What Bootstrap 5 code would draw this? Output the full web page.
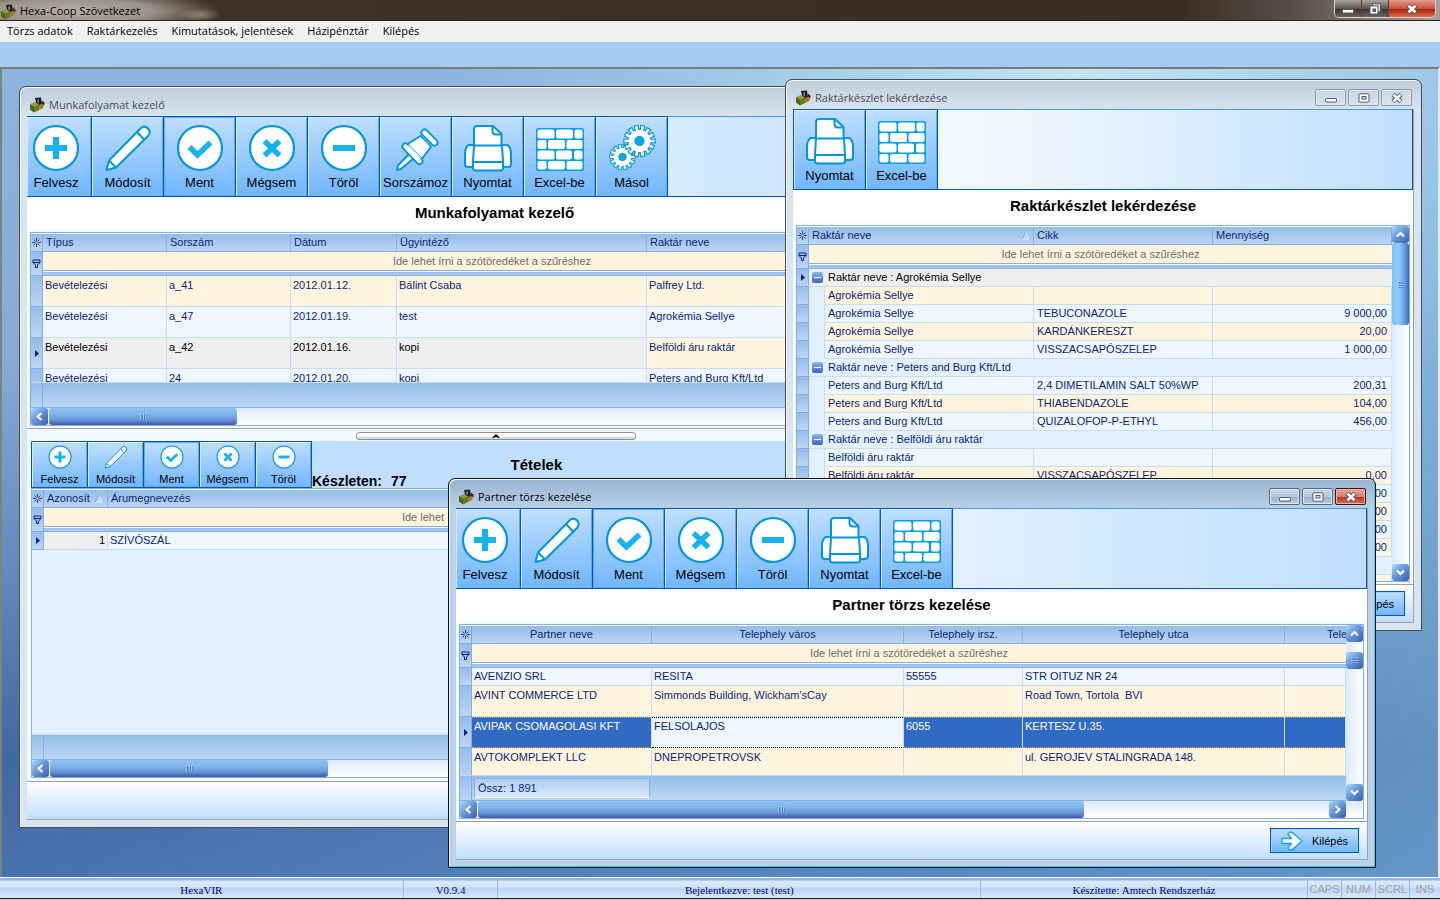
<!DOCTYPE html>
<html lang="hu">
<head>
<meta charset="utf-8">
<meta name="viewport" content="width=device-width, initial-scale=1">
<title>Hexa-Coop Szövetkezet</title>
<link rel="stylesheet" href="https://cdn.jsdelivr.net/npm/bootstrap@5.3.0/dist/css/bootstrap.min.css">
<style>
:root{--navy:#0a1f7d;--line:#86ade6;--cell:#c8dcf5;--btnline:#0058b4;--cream:#fff5de;--pale:#eef6ff;--ui:"Open Sans","Noto Sans",sans-serif;--sans:"Liberation Sans",Arial,sans-serif}
body{font-family:var(--sans);font-size:11px;line-height:18px;color:#000;background:#a6caf0}
button,input{font:inherit;color:inherit}
.minh-0{min-height:0}.minw-0{min-width:0}

/* main window */
.app-title{height:21px;font-family:var(--ui);line-height:22px;background:radial-gradient(ellipse 150px 22px at 70px 11px,#b5aea7 0,#9b9289 55%,transparent 100%),radial-gradient(ellipse 22px 7px at 200px 15px,#8a7b6c,transparent),linear-gradient(90deg,#3f3227 0,#3b2d22 82%,#59504a 90%,#a59d97 100%);border-bottom:1px solid #222}
.app-ctl{height:18px;border:1px solid #d8d3cf;border-top:0;border-radius:0 0 5px 5px;overflow:hidden}
.app-ctl button{border:0;border-right:1px solid #4a443f;padding:0;height:17px;width:27px;background:linear-gradient(#a9a39d,#5d554f 50%,#37302b 51%,#6d665f);display:flex;align-items:center;justify-content:center}
.app-ctl .x{width:46px;border-right:0;background:linear-gradient(#e29a88,#c9523a 50%,#a62108 51%,#e06a48)}
.app-menu{height:21px;background:#f0f0f0;font-family:var(--ui);padding-bottom:2px}
.app-menu a{color:#000;text-decoration:none;padding:0 7px}
.app-band{height:25px;background:#a6caf0}
.mdi{border:2px solid #696969;border-top-color:#7b7b7b;border-left-color:#808080;border-right-color:#e3e8ee;border-bottom:0;
background:radial-gradient(ellipse 45% 45% at 75% 0,#c4e5f2 0,#b4dcefaa 40%,transparent 100%),linear-gradient(90deg,#3f669c00 0,#7fb6dc88 100%),linear-gradient(180deg,#8cb4de 0,#86acd6 35%,#6389bd 62%,#41689f 85%,#4872b0 100%);position:relative;overflow:auto}

/* child windows */
.win{position:absolute;border:1px solid #4b4b4b;border-radius:7px 7px 0 0;padding:0 7px 7px;background:linear-gradient(#bfcddb 0,#d7e4f2 30px);box-shadow:inset 1px 1px 0 #f4f8fc}
.win.act{border-color:#111;background:linear-gradient(#99b4d1 0,#b9d1ea 30px);box-shadow:inset 1px 1px 0 #eef5fb,inset -1px -1px 0 #2fd0e4}
.w-munka{left:17px;top:17px;width:952px;height:742px}
.w-keszlet{left:783px;top:10px;width:637px;height:552px}
.w-partner{left:446px;top:409px;width:928px;height:390px}
.win-title{height:29px;font-family:var(--ui);color:#4d4d4d;padding:9px 2px 3px 2px}
.act .win-title{color:#000}
.win-ctl{gap:2px}
.win-ctl button{width:31px;height:17px;padding:0;border:1px solid #8a97a8;border-radius:2px;background:linear-gradient(#c9d6e3,#d5e2ef);box-shadow:inset 0 0 0 1px #dfe9f3;display:flex;align-items:center;justify-content:center}
.act .win-ctl button{border-color:#57687e;background:linear-gradient(#c5d7ea,#b3c9e0 50%,#96b0cd 51%,#b4cde6)}
.act .win-ctl .x{border-color:#4d1010;background:linear-gradient(#e6a79a,#d67d6c 50%,#b8321c 51%,#d0705c);box-shadow:inset 0 0 0 1px #e8b5aa}
.win-body{background:#f4fbff;border-right:1px solid #a0a0a0}

/* toolbar */
.tools{height:81px;border:1px solid var(--btnline);border-left:0;border-top-color:#4a98ee;background:linear-gradient(90deg,#f4faff 0,#f0f8ff 35%,#c0dfff 100%)}
.tb{width:72px;padding:2px 0 0;border:0;border-right:1px solid var(--btnline);background:linear-gradient(#c0dfff,#70b6ff);box-shadow:inset 1px 1px 0 #d9ecff,inset -1px 0 0 #5ba8fa;font-size:13px;line-height:18px;text-align:center;white-space:nowrap;margin-top:-1px;border-top:1px solid var(--btnline)}
.tb svg{display:block;margin:0 auto 2px;width:48px;height:48px}
.tb.cut{width:65px;padding-right:6px}
.tb.hot{box-shadow:inset 0 0 0 1px #5ba8fa}
.tb.edge{border-left:1px solid var(--btnline);width:73px}
.tools.mini{height:47px;border-left:1px solid var(--btnline);border-right:0}
.mini .tb{width:56px;font-size:11px;padding-top:3px}
.mini .tb svg{width:24px;height:24px;margin-bottom:1px}
.cap{height:33px;background:#fff;font-size:15px;font-weight:700;line-height:32px;text-align:center}
.cap2{background:#c0dfff}
.cap2 b{font-size:15px}.cap2 .stock{font-size:14px;line-height:14px;gap:9px}
.cap2 .tet{margin-left:104px}

/* data grid */
.gridbox{margin:2px 3px 2px 3px;border:1px solid var(--line);background:#e2f0ff}
.gridbox.items{margin:0 3px 3px 4px}
.view{border-top:1px solid #fff}
.gt{table-layout:fixed;width:100%;border-collapse:separate;border-spacing:0;color:var(--navy)}
.gt th,.gt td{height:18px;line-height:17px;padding:0 3px;font-weight:400;vertical-align:top;white-space:pre;overflow:hidden;border-right:1px solid var(--cell);border-bottom:1px solid var(--cell)}
.tall td,.items td{padding:0 2px}
.gt.tall td{height:31px}
.tall tbody td{line-height:19px}
.gt.tall .low td{height:18px;line-height:17px}
.gt .num{padding-right:4px;text-align:right}
.gt thead th{background:linear-gradient(#94bde9,#bcd6f3);border-color:var(--line)}
.gt .ind{background:linear-gradient(#94bde9,#bcd6f3);border-color:var(--line);padding:0;text-align:center;vertical-align:middle}
.gt .ind svg{display:block;margin:0 auto}
.gt .flt{height:24px;padding:0;border-right:0;background:linear-gradient(var(--cream) 18px,var(--line) 18px,var(--line) 19px,#fff 19px,#fff 20px,#94bde9 20px,#b5d0f0 24px)}
.flt input{display:block;width:100%;height:18px;border:0;background:none;text-align:center;padding:0;outline:0}
.flt input::placeholder{color:#6c6c6c;opacity:1}
.gt .c td{background:var(--cream)}.gt .p td{background:var(--pale)}
.gt .g td{background:#e2f0ff;border-right:0}
.gt .now td,.gt td.now{background:#efefef;color:#000}
.gt .sel td{background:#316ac5;color:#fff;border-bottom:1px dotted #e8a33a;background-image:linear-gradient(90deg,#e8a33a 50%,transparent 50%);background-size:2px 1px;background-repeat:repeat-x}
.gt .sel td.foc{background:var(--pale);color:var(--navy);border-bottom-color:#000;background-image:linear-gradient(90deg,#000 50%,transparent 50%);background-size:2px 1px;background-repeat:repeat-x}
.gt tr .ind.ind{padding:0;background:linear-gradient(#94bde9,#bcd6f3)!important;border-bottom:1px solid var(--line)!important;border-right:1px solid var(--line)}
.gt tr .pad{background:#e2f0ff!important;border-bottom-color:#e2f0ff;padding:0}
.gt .tele{padding-left:42px}
.twisty{width:11px;height:11px;border:0;border-radius:2px;padding:0;background:linear-gradient(#8ab8f0,#3a66b8);margin:3px 5px 0 0;vertical-align:top;display:inline-block}
.twisty::before{content:"";display:block;width:7px;height:1px;background:#fff;margin:0 auto}
.foot{height:26px;border-top:1px solid var(--cell);background:linear-gradient(#94bde9,#bcd6f3);border-bottom:1px solid var(--line);color:var(--navy)}
.foot i{width:12px;border-right:1px solid var(--line)}
.sum{width:176px;height:20px;margin:2px;padding:0 3px;border:1px solid var(--line);border-bottom-color:#fff;background:linear-gradient(#b0cdf0,#d8e8fa)}

/* scroll bars */
.hs{height:17px;background:linear-gradient(#dceafb,#fff)}
.hs-corner{padding-right:17px}
.vs{width:17px;background:linear-gradient(90deg,#dceafb,#fff)}
.sb{width:17px;height:17px;flex:none;padding:0;border:0;border-radius:3px;background:linear-gradient(135deg,#a6dcff 0,#6da0de 40%,#3a5cab 100%);display:flex;align-items:center;justify-content:center}
.th-s{margin-top:10px}
.th-h,.th-v{flex:none;border:0;padding:0;border-radius:3px;display:flex;align-items:center;justify-content:center}
.th-h{height:17px;background:linear-gradient(#8cc4f2,#7eb2ea 40%,#6796d8 70%,#3d57a8)}
.th-v{width:17px;height:82px;background:linear-gradient(90deg,#7cc0f6,#90ccff 40%,#5a94e0 80%,#3d5fb4)}
.hs .th-h{margin-left:1px}
.l187{width:188px}.l278{width:278px}.l607{width:606px}
.leave{height:39px;border-top:1px solid #a0a0a0;border-bottom:1px solid #a0a0a0;background:linear-gradient(#fff,#c0dfff);padding-right:8px}
.leave button{width:89px;height:25px;padding:0 10px;border:1px solid var(--btnline);background:linear-gradient(#c0dfff,#70b6ff);box-shadow:inset 1px 1px 0 #a5d0ff}
.split{height:13px;padding-top:3px;border-top:1px solid #a0a0a0;background:#f0fbff}
.split button{width:280px;height:8px;margin-left:329px;padding:0;border:1px solid #909090;border-radius:3px;background:linear-gradient(#fff 40%,#b8d4e4);display:flex;align-items:center;justify-content:center}
.h194{height:194px}

/* status bar */
.status{height:21px;border-top:1px solid #fff;background:linear-gradient(#8fb4e6 0,#8fb4e6 2px,#dbe9fa 3px,#d3e4f9 9px,#b9d4f5 10px,#d9e8fb 100%);font-family:"Liberation Serif",serif;color:#000080;line-height:24px;font-size:11px}
.status>span{text-align:center;border-right:1px solid #9fb8dc;white-space:nowrap;overflow:hidden}
.s1{flex:404 1 0}.s2{flex:94 1 0}.s3{flex:483 1 0}.s4{flex:327 1 0}
.status .k{font-family:var(--sans);color:#a0a0a0;flex:none;width:34px;line-height:22px}
.status .k:last-child{border:0;width:30px}
.desk-edge{height:2px;background:linear-gradient(#222 1px,#c8bdb2 1px)}
</style>
</head>
<body class="d-flex flex-column vh-100 overflow-hidden">
<svg width="0" height="0" class="position-absolute" aria-hidden="true">
<defs>
<g id="disc"><circle cx="24" cy="24" r="22" fill="#fff" stroke="#0096dc" stroke-width="2.2"/></g>
<symbol id="i-add" viewBox="0 0 48 48"><use href="#disc"/><path d="M24 13v22M13 24h22" stroke="#14b4f0" stroke-width="6"/></symbol>
<symbol id="i-edit" viewBox="0 0 48 48"><path d="M2.500 46 5 36.500 37 4Q40.500 1 44 4.500T44 12L12 43.500ZM5 36.500 12 43.500M33 8 40 15.500" fill="#fff" stroke="#0096dc" stroke-width="2" stroke-linejoin="round"/></symbol>
<symbol id="i-ok" viewBox="0 0 48 48"><use href="#disc"/><path d="M13.500 23 21.500 31 34.500 18.500" fill="none" stroke="#14b4f0" stroke-width="5.500"/></symbol>
<symbol id="i-no" viewBox="0 0 48 48"><use href="#disc"/><path d="M16.500 17 31.500 31.500M31.500 17 16.500 31.500" stroke="#14b4f0" stroke-width="5.500"/></symbol>
<symbol id="i-del" viewBox="0 0 48 48"><use href="#disc"/><path d="M13 24h22" stroke="#14b4f0" stroke-width="6"/></symbol>
<symbol id="i-pin" viewBox="0 0 48 48"><g stroke-linecap="round" stroke-linejoin="round"><path d="M5 46 6 41.500 18 29 22.500 33.500 9 45Z" fill="#fff" stroke="#0096dc" stroke-width="1.900"/><path d="M28.500 12 39 23 29 36 14 21Z" fill="#fff" stroke="#0096dc" stroke-width="1.900"/><path d="M32.500 8.500 42.500 18.500M13.500 22.500 27.500 37" stroke="#0096dc" stroke-width="8"/><path d="M32.500 8.500 42.500 18.500M13.500 22.500 27.500 37" stroke="#fff" stroke-width="4.400"/><path d="M29 13.500 37.500 22 28 34.500 16 22Z" fill="#fff"/><path d="M29 12.500 38.500 22M17 21.500 29 33" stroke="#14b4f0" stroke-width="1"/></g></symbol>
<symbol id="i-print" viewBox="0 0 48 48"><g fill="#fff" stroke="#0096dc" stroke-width="2" stroke-linejoin="round"><path d="M10 23V5Q10 2 13 2H29L37.500 10V23Z"/><path d="M28.500 2.500V7Q28.500 10.500 32 10.500H36.500" fill="none"/><path d="M10 21H4.500Q1 24 1 29V40Q1 43 4 43H10ZM38 21H43.500Q47 24 47 29V40Q47 43 44 43H38Z"/><path d="M10 21.500H38L39 38V44Q39 46.500 36 46.500H12Q9 46.500 9 44V38ZM9 38H39"/></g></symbol>
<symbol id="i-brick" viewBox="0 0 48 48"><rect x="0" y="4" width="48" height="43" rx="2.500" fill="#08a0e4"/><g fill="#fff"><rect x="1.500" y="5.500" width="17" height="9" rx="2"/><rect x="20" y="5.500" width="17" height="9" rx="2"/><rect x="38.500" y="5.500" width="8" height="9" rx="2"/><rect x="1.500" y="16" width="9" height="9" rx="2"/><rect x="12" y="16" width="17" height="9" rx="2"/><rect x="30.500" y="16" width="16" height="9" rx="2"/><rect x="1.500" y="26.500" width="17" height="9" rx="2"/><rect x="20" y="26.500" width="16" height="9" rx="2"/><rect x="38" y="26.500" width="8.500" height="9" rx="2"/><rect x="1.500" y="37" width="9" height="8.500" rx="2"/><rect x="12" y="37" width="17" height="8.500" rx="2"/><rect x="30.500" y="37" width="16" height="8.500" rx="2"/></g></symbol>
<g id="gear" fill="none"><circle r="12.500" stroke="#0096dc" stroke-width="7.500" pathLength="140" stroke-dasharray="8 2" stroke-dashoffset="4"/><circle r="12.500" fill="#0096dc"/><circle r="12" stroke="#fff" stroke-width="6" pathLength="140" stroke-dasharray="4.400 5.600" stroke-dashoffset="2.200"/><circle r="11" fill="#fff"/><circle r="4.600" fill="#08a8ec" stroke="#0096dc"/></g>
<symbol id="i-gear" viewBox="0 0 48 48"><use href="#gear" transform="translate(14.500 33) scale(.82)"/><use href="#gear" transform="translate(31.500 17)"/></symbol>
<symbol id="i-app" viewBox="0 0 16 16"><path d="M6 1 12 .5 13 9 8 10Z" fill="#1c1c1e"/><path d="M8 2.500 10 2.300V6H8.500Z" fill="#77808a"/><path d="M10.500 7 15 8 14 11 10 13Z" fill="#b0761a"/><path d="M13 3.500 15.500 5.500V8L12 7Z" fill="#3a2a10"/><path d="M1 7 6 5 10 7.500 5 9.500Z" fill="#8ea03a"/><path d="M1 7 5 9.500V15.500L1 12.500Z" fill="#4c6418"/><path d="M5 9.500 10 7.500V13L5 15.500Z" fill="#667c22"/></symbol>
<symbol id="i-star" viewBox="0 0 9 9"><path d="M4.500 0v9M0 4.500h9M1.500 1.500l6 6M7.500 1.500l-6 6" stroke="#0a1f7d" stroke-width=".8"/><circle cx="4.500" cy="4.500" r="1.300" fill="#b5d0f0"/></symbol>
<symbol id="i-filter" viewBox="0 0 9 9"><path d="M1 1h7v2.500L5.500 6v2.500h-2V6L1 3.500ZM1 3.500h7" fill="none" stroke="#0a1f7d"/></symbol>
<symbol id="i-cur" viewBox="0 0 4 7"><path d="M0 0 4 3.500 0 7Z" fill="#0a1f7d"/></symbol>
<symbol id="i-sort" viewBox="0 0 9 9"><path d="M4.500 1 8 8H1Z" fill="#b4d0f2" stroke="#e6f2ff"/><path d="M4.500 1 1 8" stroke="#6c9ad8" fill="none"/></symbol>
<symbol id="c-l" viewBox="0 0 9 9"><path d="M6.500 1 2.500 4.500 6.500 8" fill="none" stroke="#fff" stroke-width="2"/></symbol>
<symbol id="c-r" viewBox="0 0 9 9"><path d="M2.500 1 6.500 4.500 2.500 8" fill="none" stroke="#fff" stroke-width="2"/></symbol>
<symbol id="c-u" viewBox="0 0 9 9"><path d="M1 6.500 4.500 3 8 6.500" fill="none" stroke="#fff" stroke-width="2"/></symbol>
<symbol id="c-d" viewBox="0 0 9 9"><path d="M1 2.500 4.500 6 8 2.500" fill="none" stroke="#fff" stroke-width="2"/></symbol>
<symbol id="g-v" viewBox="0 0 7 7"><path d="M1 0v7M3.500 0v7M6 0v7" stroke="#c4dcf8" stroke-width=".8"/><path d="M1.800 1v6M4.300 1v6M6.800 1v6" stroke="#3c64b4" stroke-width=".8"/></symbol>
<symbol id="g-h" viewBox="0 0 7 7"><path d="M0 1h7M0 3.500h7M0 6h7" stroke="#c4dcf8" stroke-width=".8"/><path d="M1 1.800h6M1 4.300h6M1 6.800h6" stroke="#3c64b4" stroke-width=".8"/></symbol>
<symbol id="w-min" viewBox="0 0 12 10"><rect x=".5" y="5.500" width="11" height="3.500" rx=".8" fill="#fff" stroke="#555a68"/></symbol>
<symbol id="w-max" viewBox="0 0 12 10"><rect x="1" y=".8" width="10" height="8.400" rx=".8" fill="#fff" stroke="#555a68"/><rect x="4" y="3.500" width="4" height="2.500" fill="#dde" stroke="#555a68"/></symbol>
<symbol id="w-res" viewBox="0 0 12 12"><rect x="3.500" y=".8" width="8" height="8" fill="#ddd" stroke="#555a68"/><rect x="1" y="3" width="8" height="8" fill="#fff" stroke="#555a68"/><rect x="4" y="6" width="2.500" height="2.500" fill="#666" stroke="#555a68"/></symbol>
<symbol id="w-x" viewBox="0 0 12 10"><path d="M2 1.500 10 8.500M10 1.500 2 8.500" stroke="#555a68" stroke-width="4.600"/><path d="M2.500 1.800 9.500 8.200M9.500 1.800 2.500 8.200" stroke="#fff" stroke-width="2.600"/></symbol>
<symbol id="i-out" viewBox="0 0 22 20"><path d="M1 7.500H10.500L7.500 4Q6.500 2.500 8 1.500T11.500 1.500L21 10 11.500 18.500Q9.500 19.500 8 18.500T7.500 16L10.500 12.500H1Z" fill="#fff" stroke="#12a4e6" stroke-width="1.400" stroke-linejoin="round"/></symbol>
</defs>
</svg>

<header class="app-title d-flex align-items-start flex-shrink-0">
  <svg width="16" height="16" class="mt-1"><use href="#i-app"/></svg>
  <span class="ps-1">Hexa-Coop Szövetkezet</span>
  <div class="app-ctl d-flex ms-auto me-1">
    <button aria-label="Kis méret"><svg width="12" height="10"><use href="#w-min"/></svg></button>
    <button aria-label="Előző méret"><svg width="12" height="12"><use href="#w-res"/></svg></button>
    <button class="x" aria-label="Bezárás"><svg width="12" height="10"><use href="#w-x"/></svg></button>
  </div>
</header>
<nav class="app-menu d-flex align-items-center flex-shrink-0">
  <a href="#">Törzs adatok</a><a href="#">Raktárkezelés</a><a href="#">Kimutatások, jelentések</a><a href="#">Házipénztár</a><a href="#">Kilépés</a>
</nav>
<div class="app-band flex-shrink-0"></div>

<main class="mdi flex-grow-1 minh-0">

<section class="win w-munka d-flex flex-column">
  <div class="win-title d-flex align-items-center flex-shrink-0"><svg width="16" height="16"><use href="#i-app"/></svg><span class="ps-1">Munkafolyamat kezelő</span></div>
  <div class="win-body d-flex flex-column flex-grow-1 minh-0">
    <div class="tools d-flex flex-shrink-0">
      <button class="tb cut"><svg><use href="#i-add"/></svg>Felvesz</button>
      <button class="tb"><svg><use href="#i-edit"/></svg>Módosít</button>
      <button class="tb hot"><svg><use href="#i-ok"/></svg>Ment</button>
      <button class="tb"><svg><use href="#i-no"/></svg>Mégsem</button>
      <button class="tb"><svg><use href="#i-del"/></svg>Töröl</button>
      <button class="tb"><svg><use href="#i-pin"/></svg>Sorszámoz</button>
      <button class="tb"><svg><use href="#i-print"/></svg>Nyomtat</button>
      <button class="tb"><svg><use href="#i-brick"/></svg>Excel-be</button>
      <button class="tb"><svg><use href="#i-gear"/></svg>Másol</button>
    </div>
    <h1 class="cap m-0 flex-shrink-0">Munkafolyamat kezelő</h1>
    <div class="gridbox h194 d-flex flex-column flex-shrink-0">
      <div class="d-flex flex-grow-1 minh-0">
        <div class="d-flex flex-column flex-grow-1 minw-0">
          <div class="view flex-grow-1 minh-0 overflow-hidden">
            <table class="gt tall">
              <colgroup><col style="width:12px"><col style="width:124px"><col style="width:124px"><col style="width:106px"><col style="width:250px"><col></colgroup>
              <thead>
                <tr><th class="ind"><svg width="9" height="9"><use href="#i-star"/></svg></th><th>Típus</th><th>Sorszám</th><th>Dátum</th><th>Ügyintéző</th><th>Raktár neve</th></tr>
                <tr><th class="ind"><svg width="9" height="9"><use href="#i-filter"/></svg></th><th class="flt" colspan="5"><input aria-label="Szűrés" placeholder="Ide lehet írni a szótöredéket a szűréshez"></th></tr>
              </thead>
              <tbody>
                <tr class="c"><td class="ind"></td><td>Bevételezési</td><td>a_41</td><td>2012.01.12.</td><td>Bálint Csaba</td><td>Palfrey Ltd.</td></tr>
                <tr class="p"><td class="ind"></td><td>Bevételezési</td><td>a_47</td><td>2012.01.19.</td><td>test</td><td>Agrokémia Sellye</td></tr>
                <tr class="c"><td class="ind"><svg width="4" height="7"><use href="#i-cur"/></svg></td><td class="now">Bevételezési</td><td class="now">a_42</td><td class="now">2012.01.16.</td><td class="now">kopi</td><td>Belföldi áru raktár</td></tr>
                <tr class="p"><td class="ind"></td><td>Bevételezési</td><td>24</td><td>2012.01.20.</td><td>kopi</td><td>Peters and Burg Kft/Ltd</td></tr>
              </tbody>
            </table>
          </div>
          <div class="foot d-flex flex-shrink-0"><i></i></div>
        </div>
        <div class="vs d-flex flex-column flex-shrink-0"></div>
      </div>
      <div class="hs d-flex flex-shrink-0">
        <button class="sb" aria-label="Balra"><svg width="9" height="9"><use href="#c-l"/></svg></button>
        <button class="th-h l187" aria-label="Görgető"><svg width="7" height="7"><use href="#g-v"/></svg></button>
      </div>
    </div>
    <div class="split flex-shrink-0"><button aria-label="Elválasztó"><svg width="8" height="4" viewBox="0 0 8 4"><path d="M1 4 4 1 7 4" fill="none" stroke="#000" stroke-width="1.500"/></svg></button></div>
    <div class="cap2 d-flex flex-shrink-0 ms-1">
      <div class="tools mini d-flex">
        <button class="tb"><svg><use href="#i-add"/></svg>Felvesz</button>
        <button class="tb"><svg><use href="#i-edit"/></svg>Módosít</button>
        <button class="tb hot"><svg><use href="#i-ok"/></svg>Ment</button>
        <button class="tb"><svg><use href="#i-no"/></svg>Mégsem</button>
        <button class="tb"><svg><use href="#i-del"/></svg>Töröl</button>
      </div>
      <b class="stock d-flex align-self-end"><span>Készleten:</span><span>77</span></b>
      <b class="tet align-self-center">Tételek</b>
    </div>
    <div class="gridbox items d-flex flex-column flex-grow-1 minh-0">
      <div class="view flex-grow-1 minh-0 overflow-hidden">
        <table class="gt">
          <colgroup><col style="width:12px"><col style="width:64px"><col></colgroup>
          <thead>
            <tr><th class="ind"><svg width="9" height="9"><use href="#i-star"/></svg></th><th class="pe-1"><span class="d-flex align-items-center justify-content-between"><span class="overflow-hidden">Azonosít</span><svg width="9" height="9" class="flex-shrink-0"><use href="#i-sort"/></svg></span></th><th>Árumegnevezés</th></tr>
            <tr><th class="ind"><svg width="9" height="9"><use href="#i-filter"/></svg></th><th class="flt" colspan="2"><input aria-label="Szűrés" placeholder="Ide lehet írni a szótöredéket a szűréshez"></th></tr>
          </thead>
          <tbody><tr class="p"><td class="ind"><svg width="4" height="7"><use href="#i-cur"/></svg></td><td class="now text-end">1</td><td>SZÍVÓSZÁL</td></tr></tbody>
        </table>
      </div>
      <div class="foot d-flex flex-shrink-0"><i></i></div>
      <div class="hs d-flex flex-shrink-0">
        <button class="sb" aria-label="Balra"><svg width="9" height="9"><use href="#c-l"/></svg></button>
        <button class="th-h l278" aria-label="Görgető"><svg width="7" height="7"><use href="#g-v"/></svg></button>
      </div>
    </div>
    <div class="leave flex-shrink-0"></div>
  </div>
</section>

<section class="win w-keszlet d-flex flex-column">
  <div class="win-title d-flex align-items-center flex-shrink-0"><svg width="16" height="16"><use href="#i-app"/></svg><span class="ps-1">Raktárkészlet lekérdezése</span>
    <div class="win-ctl d-flex ms-auto">
      <button aria-label="Kis méret"><svg width="12" height="10"><use href="#w-min"/></svg></button>
      <button aria-label="Teljes méret"><svg width="12" height="10"><use href="#w-max"/></svg></button>
      <button class="x" aria-label="Bezárás"><svg width="12" height="10"><use href="#w-x"/></svg></button>
    </div>
  </div>
  <div class="win-body d-flex flex-column flex-grow-1 minh-0">
    <div class="tools d-flex flex-shrink-0">
      <button class="tb edge"><svg><use href="#i-print"/></svg>Nyomtat</button>
      <button class="tb"><svg><use href="#i-brick"/></svg>Excel-be</button>
    </div>
    <h1 class="cap m-0 flex-shrink-0">Raktárkészlet lekérdezése</h1>
    <div class="gridbox d-flex flex-grow-1 minh-0">
      <div class="view flex-grow-1 minh-0 minw-0 overflow-hidden">
        <table class="gt">
          <colgroup><col style="width:12px"><col style="width:16px"><col style="width:209px"><col style="width:179px"><col></colgroup>
          <thead>
            <tr><th class="ind"><svg width="9" height="9"><use href="#i-star"/></svg></th><th colspan="2"><span class="d-flex align-items-center justify-content-between">Raktár neve<svg width="9" height="9"><use href="#i-sort"/></svg></span></th><th>Cikk</th><th>Mennyiség</th></tr>
            <tr><th class="ind"><svg width="9" height="9"><use href="#i-filter"/></svg></th><th class="flt" colspan="4"><input aria-label="Szűrés" placeholder="Ide lehet írni a szótöredéket a szűréshez"></th></tr>
          </thead>
          <tbody>
            <tr class="g now"><td class="ind"><svg width="4" height="7"><use href="#i-cur"/></svg></td><td colspan="4"><button class="twisty" aria-label="Összecsuk"></button>Raktár neve : Agrokémia Sellye</td></tr>
            <tr class="c"><td class="ind"></td><td class="pad"></td><td>Agrokémia Sellye</td><td></td><td></td></tr>
            <tr class="p"><td class="ind"></td><td class="pad"></td><td>Agrokémia Sellye</td><td>TEBUCONAZOLE</td><td class="num">9 000,00</td></tr>
            <tr class="c"><td class="ind"></td><td class="pad"></td><td>Agrokémia Sellye</td><td>KARDÁNKERESZT</td><td class="num">20,00</td></tr>
            <tr class="p"><td class="ind"></td><td class="pad"></td><td>Agrokémia Sellye</td><td>VISSZACSAPÓSZELEP</td><td class="num">1 000,00</td></tr>
            <tr class="g"><td class="ind"></td><td colspan="4"><button class="twisty" aria-label="Összecsuk"></button>Raktár neve : Peters and Burg Kft/Ltd</td></tr>
            <tr class="p"><td class="ind"></td><td class="pad"></td><td>Peters and Burg Kft/Ltd</td><td>2,4 DIMETILAMIN SALT 50%WP</td><td class="num">200,31</td></tr>
            <tr class="c"><td class="ind"></td><td class="pad"></td><td>Peters and Burg Kft/Ltd</td><td>THIABENDAZOLE</td><td class="num">104,00</td></tr>
            <tr class="p"><td class="ind"></td><td class="pad"></td><td>Peters and Burg Kft/Ltd</td><td>QUIZALOFOP-P-ETHYL</td><td class="num">456,00</td></tr>
            <tr class="g"><td class="ind"></td><td colspan="4"><button class="twisty" aria-label="Összecsuk"></button>Raktár neve : Belföldi áru raktár</td></tr>
            <tr class="p"><td class="ind"></td><td class="pad"></td><td>Belföldi áru raktár</td><td></td><td></td></tr>
            <tr class="c"><td class="ind"></td><td class="pad"></td><td>Belföldi áru raktár</td><td>VISSZACSAPÓSZELEP</td><td class="num">0,00</td></tr>
            <tr class="p"><td class="ind"></td><td class="pad"></td><td></td><td></td><td class="num">0,00</td></tr>
            <tr class="c"><td class="ind"></td><td class="pad"></td><td></td><td></td><td class="num">0,00</td></tr>
            <tr class="p"><td class="ind"></td><td class="pad"></td><td></td><td></td><td class="num">0,00</td></tr>
            <tr class="c"><td class="ind"></td><td class="pad"></td><td></td><td></td><td class="num">0,00</td></tr>
            <tr class="g"><td class="ind"></td><td colspan="4"></td></tr>
            <tr class="c"><td class="ind"></td><td class="pad"></td><td></td><td></td><td></td></tr>
          </tbody>
        </table>
      </div>
      <div class="vs d-flex flex-column flex-shrink-0">
        <button class="sb" aria-label="Fel"><svg width="9" height="9"><use href="#c-u"/></svg></button>
        <button class="th-v" aria-label="Görgető"><svg width="7" height="7"><use href="#g-h"/></svg></button>
        <button class="sb mt-auto" aria-label="Le"><svg width="9" height="9"><use href="#c-d"/></svg></button>
      </div>
    </div>
    <div class="leave d-flex justify-content-end align-items-center flex-shrink-0"><button class="d-flex align-items-center justify-content-between"><svg width="22" height="20"><use href="#i-out"/></svg>Kilépés</button></div>
  </div>
</section>

<section class="win act w-partner d-flex flex-column">
  <div class="win-title d-flex align-items-center flex-shrink-0"><svg width="16" height="16"><use href="#i-app"/></svg><span class="ps-1">Partner törzs kezelése</span>
    <div class="win-ctl d-flex ms-auto">
      <button aria-label="Kis méret"><svg width="12" height="10"><use href="#w-min"/></svg></button>
      <button aria-label="Teljes méret"><svg width="12" height="10"><use href="#w-max"/></svg></button>
      <button class="x" aria-label="Bezárás"><svg width="12" height="10"><use href="#w-x"/></svg></button>
    </div>
  </div>
  <div class="win-body d-flex flex-column flex-grow-1 minh-0">
    <div class="tools d-flex flex-shrink-0">
      <button class="tb cut"><svg><use href="#i-add"/></svg>Felvesz</button>
      <button class="tb"><svg><use href="#i-edit"/></svg>Módosít</button>
      <button class="tb hot"><svg><use href="#i-ok"/></svg>Ment</button>
      <button class="tb"><svg><use href="#i-no"/></svg>Mégsem</button>
      <button class="tb"><svg><use href="#i-del"/></svg>Töröl</button>
      <button class="tb"><svg><use href="#i-print"/></svg>Nyomtat</button>
      <button class="tb"><svg><use href="#i-brick"/></svg>Excel-be</button>
    </div>
    <h1 class="cap m-0 flex-shrink-0">Partner törzs kezelése</h1>
    <div class="gridbox d-flex flex-column flex-grow-1 minh-0">
      <div class="d-flex flex-grow-1 minh-0">
        <div class="d-flex flex-column flex-grow-1 minw-0">
          <div class="view flex-grow-1 minh-0 overflow-hidden">
            <table class="gt tall">
              <colgroup><col style="width:12px"><col style="width:180px"><col style="width:252px"><col style="width:119px"><col style="width:262px"><col></colgroup>
              <thead class="text-center">
                <tr><th class="ind"><svg width="9" height="9"><use href="#i-star"/></svg></th><th>Partner neve</th><th>Telephely város</th><th>Telephely irsz.</th><th>Telephely utca</th><th class="tele text-start pe-0 border-end-0">Tele</th></tr>
                <tr><th class="ind"><svg width="9" height="9"><use href="#i-filter"/></svg></th><th class="flt" colspan="5"><input aria-label="Szűrés" placeholder="Ide lehet írni a szótöredéket a szűréshez"></th></tr>
              </thead>
              <tbody>
                <tr class="p low"><td class="ind"></td><td>AVENZIO SRL</td><td>RESITA</td><td>55555</td><td>STR OITUZ NR 24</td><td></td></tr>
                <tr class="c"><td class="ind"></td><td>AVINT COMMERCE LTD</td><td>Simmonds Building, Wickham'sCay</td><td></td><td>Road Town, Tortola  BVI</td><td></td></tr>
                <tr class="sel"><td class="ind"><svg width="4" height="7"><use href="#i-cur"/></svg></td><td>AVIPAK CSOMAGOLASI KFT</td><td class="foc">FELSOLAJOS</td><td>6055</td><td>KERTESZ U.35.</td><td></td></tr>
                <tr class="c"><td class="ind"></td><td>AVTOKOMPLEKT LLC</td><td>DNEPROPETROVSK</td><td></td><td>ul. GEROJEV STALINGRADA 148.</td><td></td></tr>
              </tbody>
            </table>
          </div>
          <div class="foot d-flex flex-shrink-0"><i></i><div class="sum">Össz: 1 891</div></div>
        </div>
        <div class="vs d-flex flex-column flex-shrink-0">
          <button class="sb" aria-label="Fel"><svg width="9" height="9"><use href="#c-u"/></svg></button>
          <button class="sb th-s" aria-label="Görgető"><svg width="7" height="7"><use href="#g-h"/></svg></button>
          <button class="sb mt-auto" aria-label="Le"><svg width="9" height="9"><use href="#c-d"/></svg></button>
        </div>
      </div>
      <div class="hs hs-corner d-flex flex-shrink-0">
        <button class="sb" aria-label="Balra"><svg width="9" height="9"><use href="#c-l"/></svg></button>
        <button class="th-h l607" aria-label="Görgető"><svg width="7" height="7"><use href="#g-v"/></svg></button>
        <button class="sb ms-auto" aria-label="Jobbra"><svg width="9" height="9"><use href="#c-r"/></svg></button>
      </div>
    </div>
    <div class="leave d-flex justify-content-end align-items-center flex-shrink-0"><button class="d-flex align-items-center justify-content-between"><svg width="22" height="20"><use href="#i-out"/></svg>Kilépés</button></div>
  </div>
</section>
</main>

<footer class="status d-flex flex-shrink-0">
  <span class="s1">HexaVIR</span><span class="s2">V0.9.4</span><span class="s3">Bejelentkezve: test (test)</span><span class="s4">Készítette: Amtech Rendszerház</span>
  <span class="k">CAPS</span><span class="k">NUM</span><span class="k">SCRL</span><span class="k">INS</span>
</footer>
<div class="desk-edge flex-shrink-0"></div>
<script src="https://cdn.jsdelivr.net/npm/bootstrap@5.3.0/dist/js/bootstrap.bundle.min.js"></script>
</body>
</html>
